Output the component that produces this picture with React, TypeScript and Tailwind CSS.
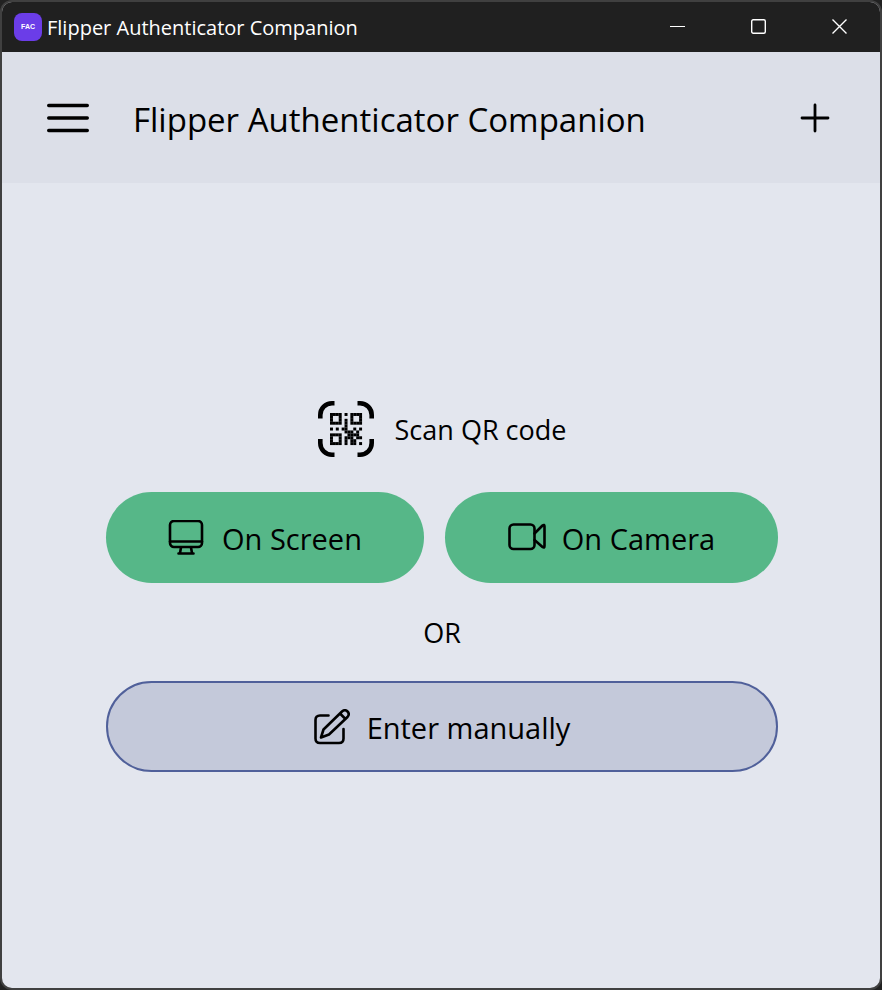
import type { ReactNode } from "react";

const QR_ROWS = [
  "####.#.####",
  "#..#...#..#",
  "#..#.#.#..#",
  "####.#.####",
  ".....#.....",
  "#.#.##..#.#",
  ".....###.#.",
  "####..####.",
  "#..#.###.##",
  "#..#.#.##..",
  "####.#.##.#",
];

function QrScanIcon() {
  return (
    <svg className="size-14" viewBox="0 0 56 56" fill="none" aria-hidden="true">
      <path
        d="M2.300 17.500V14C2.300 7.500 7.500 2.300 14 2.300H16.500M39.500 2.300H42C48.500 2.300 53.700 7.500 53.700 14V17.500M53.700 38V42C53.700 48.500 48.500 53.700 42 53.700H39.500M16.500 53.700H14C7.500 53.700 2.300 48.500 2.300 42V38"
        stroke="currentColor"
        strokeWidth="4.6"
      />
      <g transform="translate(12 12) scale(2.91)" fill="currentColor">
        {QR_ROWS.flatMap((row, y) =>
          row.split("").map((cell, x) =>
            cell === "#" ? <rect key={`${x}-${y}`} x={x} y={y} width="1.02" height="1.02" /> : null,
          ),
        )}
      </g>
    </svg>
  );
}

function StrokeIcon({ className, box, width, children }: { className: string; box: string; width: number; children: ReactNode }) {
  return (
    <svg
      className={className}
      viewBox={box}
      fill="none"
      stroke="currentColor"
      strokeWidth={width}
      strokeLinecap="round"
      strokeLinejoin="round"
      aria-hidden="true"
    >
      {children}
    </svg>
  );
}

function TitleBar() {
  return (
    <div className="flex h-[50px] items-center justify-between bg-[#202020] pl-3 text-white">
      <div className="flex items-center gap-[5px]">
        <span className="flex size-7 items-center justify-center rounded-lg bg-[#6b3de8] font-['Liberation_Sans',sans-serif] text-[7px] font-bold">
          FAC
        </span>
        <span className="pt-0.5 text-[20px] leading-7">Flipper Authenticator Companion</span>
      </div>
      <div className="flex h-full">
        <button type="button" aria-label="Minimize" className="flex w-[81px] items-center justify-center">
          <svg className="size-4" viewBox="0 0 16 16" fill="none" stroke="currentColor" aria-hidden="true">
            <path d="M0 7.500H15" />
          </svg>
        </button>
        <button type="button" aria-label="Maximize" className="flex w-[81px] items-center justify-center">
          <svg className="size-4" viewBox="0 0 16 16" fill="none" stroke="currentColor" strokeWidth="1.4" aria-hidden="true">
            <rect x=".7" y=".7" width="13.600" height="13.600" rx="1.5" />
          </svg>
        </button>
        <button type="button" aria-label="Close" className="flex w-[81px] items-center justify-center">
          <svg className="size-4" viewBox="0 0 16 16" fill="none" stroke="currentColor" strokeWidth="1.4" aria-hidden="true">
            <path d="M.5 .5 14.500 14.500M14.500 .5 .5 14.500" />
          </svg>
        </button>
      </div>
    </div>
  );
}

export default function App() {
  return (
    <div className="min-h-screen bg-[#222] font-['Open_Sans','Noto_Sans',sans-serif] text-black">
      <div className="flex min-h-screen flex-col overflow-hidden rounded-xl border-2 border-[#404040] bg-[#e3e6ee]">
        <TitleBar />
        <header className="flex h-[131px] items-center bg-[#dcdfe8] pr-[50px] pl-[45px]">
          <button type="button" aria-label="Menu">
            <StrokeIcon className="h-8 w-[42px]" box="0 0 42 32" width={3.4}>
              <path d="M1.700 3.500H40.300M1.700 16H40.300M1.700 28.500H40.300" />
            </StrokeIcon>
          </button>
          <h1 className="ml-[44px] flex-1 pt-1 text-[33px] leading-[48px]">Flipper Authenticator Companion</h1>
          <button type="button" aria-label="Add code">
            <StrokeIcon className="size-[30px]" box="0 0 30 30" width={2.8}>
              <path d="M15 2V28M2 15H28" />
            </StrokeIcon>
          </button>
        </header>
        <main className="flex flex-1 flex-col items-center justify-center pt-0.5 pr-4 pl-[18px]">
          <div className="flex items-center gap-[21px]">
            <QrScanIcon />
            <h2 className="pt-0.5 text-[27px] leading-9">Scan QR code</h2>
          </div>
          <div className="mt-[35px] grid w-full max-w-[672px] grid-cols-[318fr_333fr] gap-[21px]">
            <button type="button" className="flex h-[91px] items-center justify-center gap-[18px] rounded-full bg-[#56b788] text-[29px]">
              <StrokeIcon className="size-9" box="0 1 36 36" width={2.6}>
                <rect x="2" y="2" width="32" height="26" rx="4" />
                <path d="M2 22.500H34M13 28.500 12 34M23 28.500 24 34M10.500 34.500H25.500" />
              </StrokeIcon>
              <span className="pt-0.5">On Screen</span>
            </button>
            <button type="button" className="flex h-[91px] items-center justify-center gap-[16px] rounded-full bg-[#56b788] text-[29px]">
              <StrokeIcon className="h-9 w-[38px]" box="0 1 38 36" width={2.6}>
                <rect x="1.5" y="5.500" width="25" height="24.500" rx="4" />
                <path d="M26.500 14.500 34.500 6.500Q36.500 5 36.500 7.500V27Q36.500 29.500 34.500 28L26.500 21" />
              </StrokeIcon>
              <span className="pt-0.5">On Camera</span>
            </button>
          </div>
          <p className="mt-[33px] mb-[31px] text-[27px] leading-[34px]">OR</p>
          <button
            type="button"
            className="flex h-[91px] w-full max-w-[672px] items-center justify-center gap-[17px] rounded-full border-2 border-[#50609a] bg-[#c4c9da] text-[29px]"
          >
            <StrokeIcon className="size-9" box="0 3 36 36" width={2.6}>
              <path d="M14.500 9.500H6Q1.500 9.500 1.500 14V32.500Q1.500 37 6 37H25Q29.500 37 29.500 32.500V23" />
              <path d="M7 31.500 9.500 23.500 28 5.500Q31 3 33.500 5.500 36 8 33.500 11L15 28.500ZM26 7.500 31.500 13" />
            </StrokeIcon>
            <span className="pt-0.5">Enter manually</span>
          </button>
        </main>
      </div>
    </div>
  );
}
